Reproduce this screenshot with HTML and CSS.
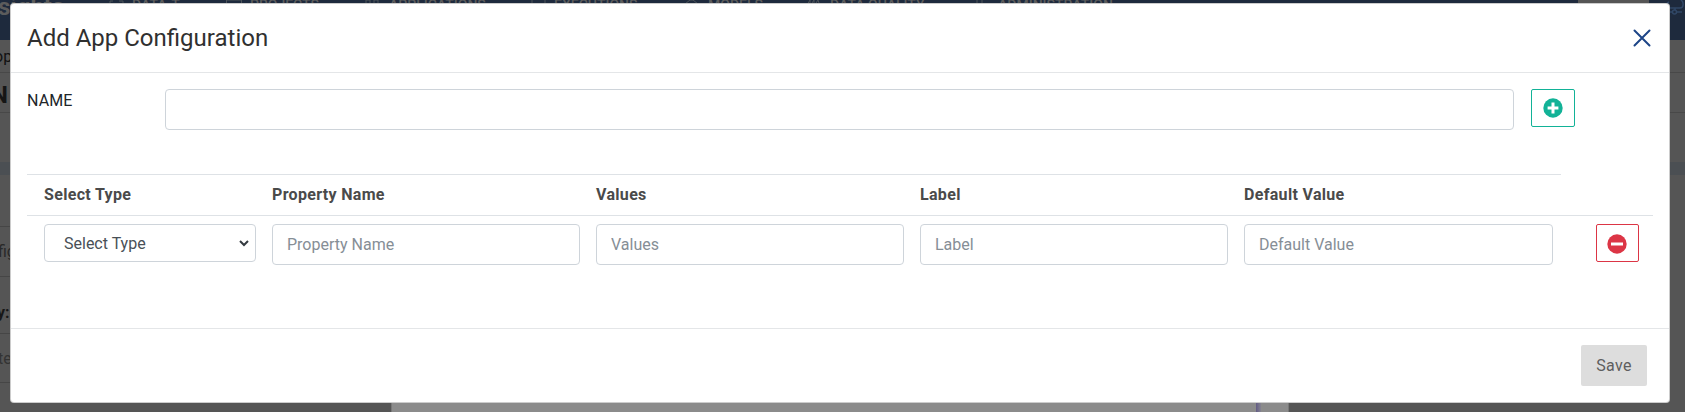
FILE: index.html
```
<!DOCTYPE html>
<html lang="en">
<head>
<meta charset="utf-8">
<title>Add App Configuration</title>
<link rel="stylesheet" href="styles.css">
</head>
<body>
<div class="page" aria-hidden="true">
  <header class="nav">
    <div class="brand">sights</div>
    <div class="nav-item item-data"><svg viewBox="0 0 16 16"><path d="M5 2H2v3M11 2h4v3"/></svg>DATA-T</div>
    <div class="nav-item item-projects"><svg viewBox="0 0 16 16"><path d="M.5 14V1h15v13z"/></svg>PROJECTS</div>
    <div class="nav-item item-apps"><svg viewBox="0 0 16 16"><path d="M1 6V1h4v5M9 6V1h4v5"/></svg>APPLICATIONS</div>
    <div class="nav-item item-exec"><svg viewBox="0 0 16 16"><path d="M2 0v14M15 0v14"/></svg>EXECUTIONS</div>
    <div class="nav-item item-models"><svg viewBox="0 0 16 16"><path d="M1 5l5-4h3l5 4"/></svg>MODELS</div>
    <div class="nav-item item-quality"><svg viewBox="0 0 16 16"><path d="M1 6l3-5v6l4-6v6l4-6 2 6"/></svg>DATA QUALITY</div>
    <div class="nav-item item-admin"><svg viewBox="0 0 16 16"><path d="M3 6V1M8 6V1"/></svg>ADMINISTRATION</div>
    <div class="partner"></div>
    <svg class="cloud" viewBox="0 0 20 18"><path d="M5 8C1 8 1 3 4 2M16 0c3 2 3 8-1 8H5M10 8v2M3 12h4M12 12h5"/><circle cx="9.500" cy="12" r="2"/></svg>
  </header>
  <div class="crumb">op</div>
  <div class="heading">N</div>
  <div class="band"></div>
  <div class="line line-a"></div>
  <div class="line line-b">fig</div>
  <div class="line line-c">y:</div>
  <div class="line line-d">te</div>
  <div class="panel"><span class="panel-edge"></span></div>
</div>

<div class="modal" role="dialog">
  <div class="modal-header">
    <h1 class="modal-title">Add App Configuration</h1>
    <button class="close" aria-label="Close"><svg viewBox="0 0 18 18"><path d="M1.500 1.500l15 15M16.500 1.500l-15 15"/></svg></button>
  </div>
  <div class="modal-body">
    <div class="name-row">
      <label class="name-label" for="name">NAME</label>
      <input class="field" id="name" type="text">
      <button class="icon-btn add" aria-label="Add"><svg viewBox="0 0 20 20"><circle cx="10" cy="10" r="9.700"/><path d="M10 4.600v10.800M4.600 10h10.800"/></svg></button>
    </div>
    <div class="grid-head">
      <div>Select Type</div><div>Property Name</div><div>Values</div><div>Label</div><div>Default Value</div>
    </div>
    <div class="grid-row">
      <div class="select-wrap">
        <select class="select"><option>Select Type</option></select>
        <svg class="caret" viewBox="0 0 10 7"><path d="M1 1l4 4 4-4"/></svg>
      </div>
      <input class="field" type="text" placeholder="Property Name">
      <input class="field" type="text" placeholder="Values">
      <input class="field" type="text" placeholder="Label">
      <input class="field" type="text" placeholder="Default Value">
      <button class="icon-btn remove" aria-label="Remove"><svg viewBox="0 0 20 20"><circle cx="10" cy="10" r="9.700"/><path d="M4 10h12"/></svg></button>
    </div>
  </div>
  <div class="modal-footer"><button class="save" disabled>Save</button></div>
</div>
</body>
</html>
```
FILE: styles.css
```
* { box-sizing: border-box; }
body {
  display: flow-root;
  margin: 0;
  height: 412px;
  overflow: hidden;
  background: #555;
  font-family: Roboto, sans-serif;
  font-size: 16px;
  line-height: 24px;
  color: #212529;
}
button, input, select { font: inherit; }

/* Dimmed page under the dialog */
.page { position: absolute; inset: 0; overflow: hidden; }
.nav { position: relative; height: 40px; background: #1e2a3d; color: #5c5c5c; }
.brand { position: absolute; left: -2px; top: -5px; font-size: 24px; font-weight: 700; }
.nav-item {
  position: absolute; top: -7px; display: flex; gap: 8px;
  font-size: 14px; font-weight: 500; white-space: nowrap;
}
.nav-item svg { width: 16px; height: 16px; margin-top: 6px; fill: none; stroke: #4b5259; }
.item-data { left: 108px; }
.item-projects { left: 226px; }
.item-apps { left: 365px; }
.item-exec { left: 530px; }
.item-models { left: 684px; }
.item-quality { left: 806px; }
.item-admin { left: 974px; }
.partner { position: absolute; left: 1578px; top: 0; width: 71px; height: 6px; background: #555; }
.cloud { position: absolute; left: 1665px; top: 0; width: 20px; height: 18px; fill: none; stroke: #304766; stroke-width: 1.5; }
.crumb { height: 32px; padding-top: 5px; color: #111; text-indent: -6px; }
.heading { height: 41px; padding-top: 10px; border: solid #484848; border-width: 1px 0; font-size: 24px; font-weight: 700; color: #151515; text-indent: -9px; }
.band { height: 13px; margin-top: 49px; background: #4b4f53; }
.line { height: 50px; border-bottom: 1px solid #464646; line-height: 50px; color: #292929; text-indent: -2px; }
.line-a { height: 52px; }
.line-c { height: 57px; line-height: 71px; font-weight: 700; color: #171717; text-indent: -3px; }
.line-d { height: 49px; color: #333; }
/* The page's right margin carries no row borders */
.page::after { content: ""; position: absolute; left: 1670px; top: 175px; width: 15px; height: 237px; background: #555; }
.panel { position: absolute; left: 391px; top: 400px; width: 898px; height: 12px; background: #8b8b8b; border: solid #777; border-width: 0 1px; }
.panel-edge { position: absolute; left: 864px; width: 5px; height: 12px; background: linear-gradient(90deg, #625b85, #858490); }

.modal {
  position: relative;
  width: 1660px;
  height: 400px;
  margin: 3px 0 0 10px;
  background: #fff;
  border: 1px solid rgba(0, 0, 0, .2);
  border-radius: 4px;
  display: flex;
  flex-direction: column;
}
.modal-header {
  height: 69px;
  padding: 0 18px 0 16px;
  border-bottom: 1px solid #e4e6e8;
  display: flex;
  align-items: center;
  justify-content: space-between;
}
.modal-title { margin: 0; font-size: 24px; font-weight: 400; line-height: 36px; color: #303030; }
.close { padding: 0; border: 0; background: none; display: flex; }
.close svg { width: 18px; height: 18px; fill: none; stroke: #1d4587; stroke-width: 2; stroke-linecap: round; }
.modal-body { flex: 1; padding: 16px 16px 0; }
.name-row { display: grid; grid-template-columns: 138px 1349px 44px; align-items: start; height: 85px; }
.name-row .icon-btn { margin-left: 17px; }
.name-label { line-height: 23px; letter-spacing: .1px; }
.field {
  width: 100%;
  height: 41px;
  padding: 0 15px 0 14px;
  border: 1px solid #ced4da;
  border-radius: 4px;
  background: #fff;
  color: #495057;
}
.field::placeholder { color: #868e96; opacity: 1; }
.icon-btn {
  width: 44px;
  height: 38px;
  padding: 0;
  border: 1px solid;
  border-radius: 2px;
  background: #fff;
  display: flex;
  align-items: center;
  justify-content: center;
}
.icon-btn svg { width: 20px; height: 20px; }
.icon-btn circle { fill: currentColor; }
.icon-btn path { stroke: #fff; stroke-width: 3; fill: none; }
.add { color: #12b297; }
.remove { color: #dc3545; width: 43px; margin-left: 27px; }
.remove svg { margin: 2px 1px 0 0; }
.grid-head, .grid-row {
  display: grid;
  grid-template-columns: 212px 308px 308px 308px 309px 92px;
  column-gap: 16px;
  padding-left: 17px;
}
.grid-head { width: 1534px; height: 41px; border-top: 1px solid #dee2e6; line-height: 39px; font-weight: 700; letter-spacing: .32px; color: #4a4a4a; overflow: hidden; }
.grid-row { width: 1626px; border-top: 1px solid #dee2e6; padding-top: 8px; }
.select-wrap { position: relative; height: 38px; }
.select { display: block; appearance: none; width: 100%; height: 38px; padding: 1px 0 0 19px; border: 1px solid #ced4da; border-radius: 4px; background: #fff; color: #495057; }
.caret { position: absolute; right: 7px; top: 16px; width: 10px; height: 7px; fill: none; stroke: #343a40; stroke-width: 2; }
.modal-footer { height: 74px; padding: 16px 22px 0; border-top: 1px solid #e4e6e8; display: flex; justify-content: flex-end; align-items: flex-start; }
.save { width: 66px; height: 41px; padding: 0; border: 0; border-radius: 2px; background: #ddd; color: #5e5e5e; font-weight: 400; letter-spacing: .3px; }
```
